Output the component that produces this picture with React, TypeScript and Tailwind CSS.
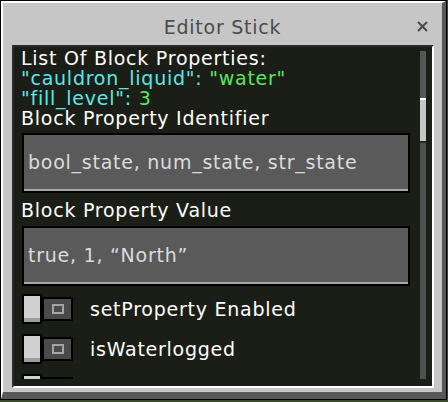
import React from 'react';

const font = { fontFamily: '"DejaVu Sans", "Noto Sans", sans-serif' };

function Toggle({ label }: { label?: string }) {
  return (
    <div className="flex h-[30px] shrink-0 items-center">
      <div className="h-[30px] w-[20px] border-2 border-black bg-[#d0d0d0]">
        <div className="h-full w-full border-b-4 border-[#9c9c9c]" />
      </div>
      <div className="flex h-[24px] w-[31px] items-center justify-center border-2 border-black bg-[#4a4a4a]">
        <div className="h-[10px] w-[12px] border-2 border-[#a6a6a6]" />
      </div>
      {label && (
        <span className="ml-[17px] text-[19px] leading-[20px] tracking-[0.75px] text-white">
          {label}
        </span>
      )}
    </div>
  );
}

function TextBox({ value }: { value: string }) {
  return (
    <div className="mr-[10px] ml-[8px] flex h-[60px] shrink-0 border-2 border-black bg-[#5a5a5a]">
      <div className="flex w-full items-center border-b-2 border-[#a8a8a8] px-[4px] text-[19px] tracking-[0.75px] text-[#dcdcdc]">
        {value}
      </div>
    </div>
  );
}

export default function App() {
  return (
    <div className="h-[402px] w-[448px] bg-[#3a4a2c]" style={font}>
      <div className="h-[400px] w-[447px] bg-black p-px">
        <div className="flex h-full w-full flex-col border-t-2 border-l-2 border-r-4 border-b-[7px] border-t-white border-l-white border-r-[#585858] border-b-[#585858] bg-[#c6c6c6]">
          {/* title bar */}
          <div className="relative flex h-[42px] shrink-0 items-center justify-center pt-[6px]">
            <span className="text-[19px] tracking-[0.75px] text-[#4c4c4c]">Editor Stick</span>
            <svg
              className="absolute top-[18px] right-[14px]"
              width="11"
              height="11"
              viewBox="0 0 11 11"
            >
              <path d="M1 1 L10 10 M10 1 L1 10" stroke="#4a4a4a" strokeWidth="2" />
            </svg>
          </div>

          {/* content */}
          <div className="mr-[8px] mb-[4px] ml-[9px] flex min-h-0 flex-1 border-t-2 border-l-2 border-r-2 border-b-2 border-t-[#2a2a2a] border-l-[#2a2a2a] border-r-white border-b-white bg-[#1b1e16]">
            <div className="flex h-[332px] flex-1 flex-col overflow-hidden pt-px">
              <div className="pl-[7px] text-[19px] leading-[20px] tracking-[0.75px]">
                <div className="text-white">List Of Block Properties:</div>
                <div>
                  <span className="text-[#5ee6e6]">"cauldron_liquid": </span>
                  <span className="text-[#5ae65a]">"water"</span>
                </div>
                <div>
                  <span className="text-[#5ee6e6]">"fill_level": </span>
                  <span className="text-[#5ae65a]">3</span>
                </div>
                <div className="text-white">Block Property Identifier</div>
              </div>
              <div className="mt-[5px]">
                <TextBox value="bool_state, num_state, str_state" />
              </div>
              <div className="mt-[7px] pl-[7px] text-[19px] leading-[20px] tracking-[0.75px] text-white">
                Block Property Value
              </div>
              <div className="mt-[6px]">
                <TextBox value="true, 1, “North”" />
              </div>
              <div className="mt-[8px] flex flex-col gap-[10px] pl-[8px]">
                <Toggle label="setProperty Enabled" />
                <Toggle label="isWaterlogged" />
                <Toggle />
              </div>
            </div>
            {/* scrollbar */}
            <div className="mt-[4px] mr-[6px] mb-[7px] flex w-[6px] flex-col bg-[#4f4f4f]">
              <div className="h-[47px] bg-[#575757]" />
              <div className="h-[45px] border-t-2 border-b-2 border-t-white border-b-[#2a2a2a] bg-[#c6c6c6]" />
            </div>
          </div>
        </div>
      </div>
    </div>
  );
}
